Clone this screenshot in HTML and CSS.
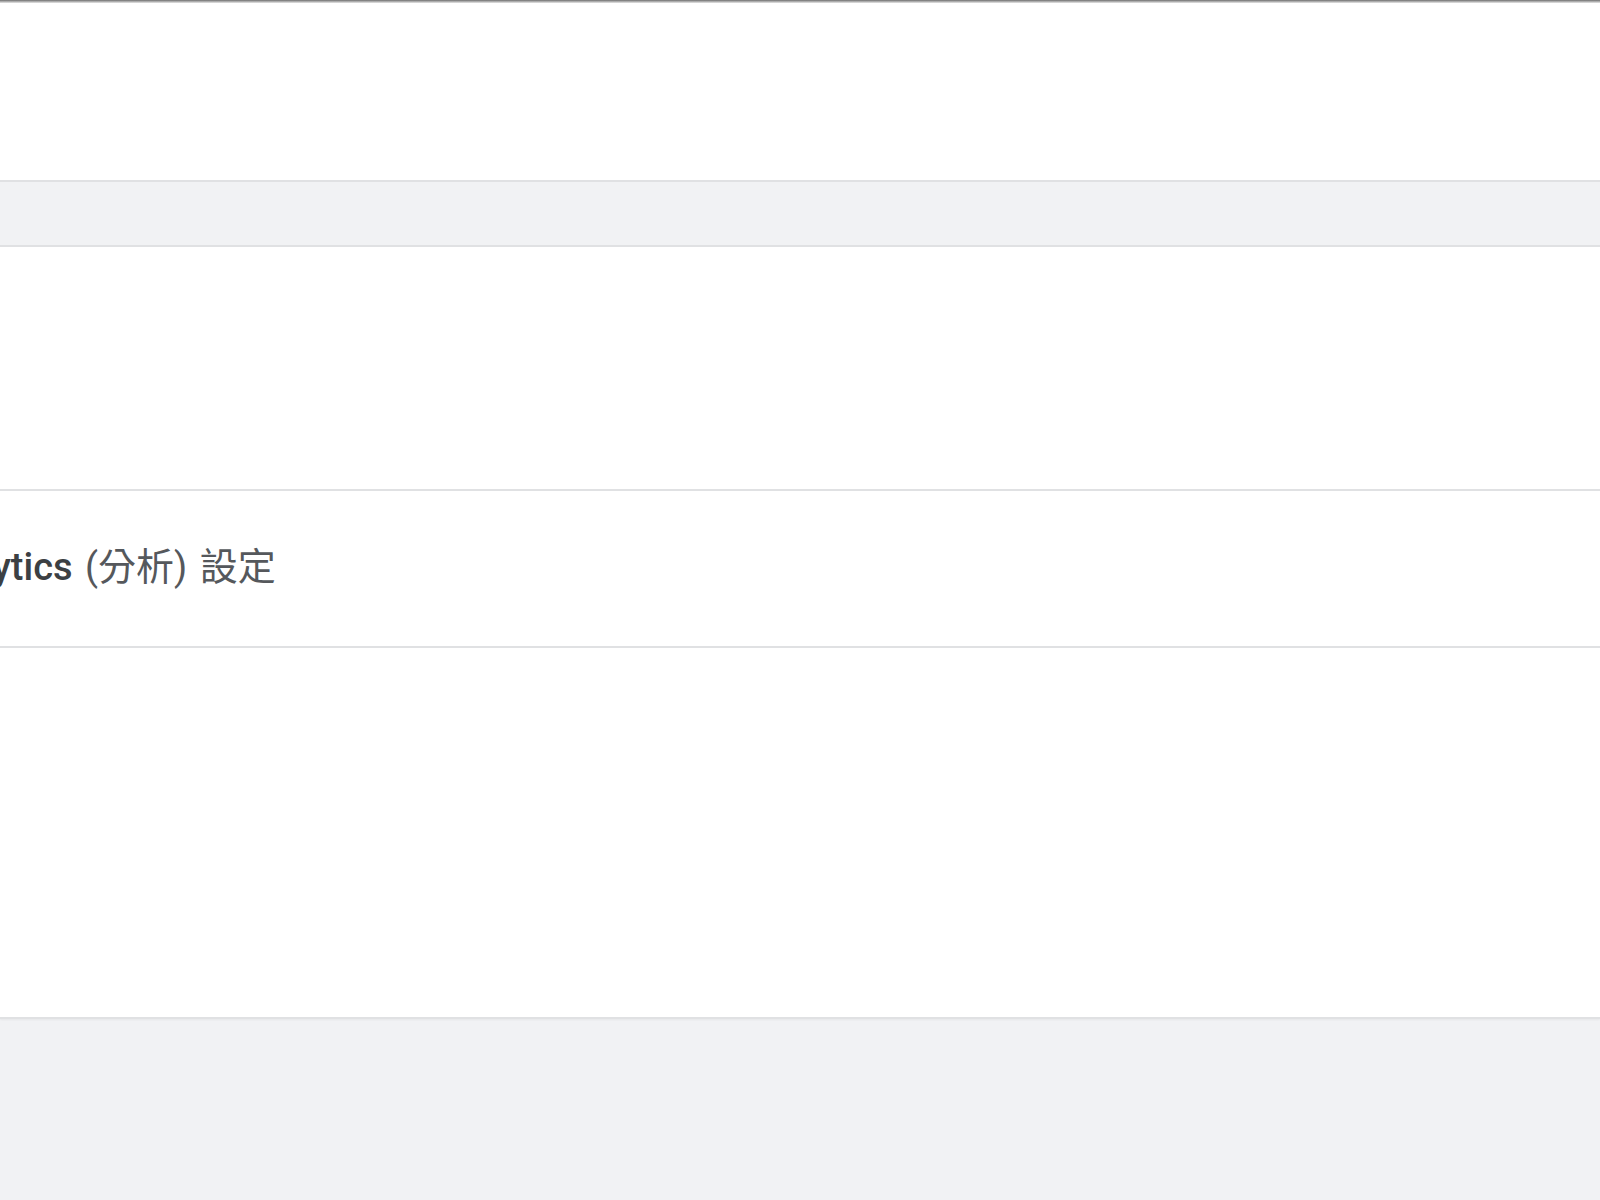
FILE: index.html
```html
<!DOCTYPE html>
<html lang="zh-Hant">
<head>
    <meta charset="UTF-8">
    <meta name="viewport" content="width=device-width, initial-scale=1.0">
    <title>Google Analytics (分析) 設定</title>
    <link rel="stylesheet" href="styles.css">
</head>
<body>
    <div class="top-edge"></div>
    <div class="panel panel-head"></div>
    <div class="band"></div>
    <div class="panel panel-intro"></div>
    <div class="panel panel-title">
        <h2 class="section-title">
            <span class="title-en">Google Analytics</span>
            <span class="title-zh">(分析) 設定</span>
        </h2>
    </div>
    <div class="panel panel-body"></div>
    <div class="page-rest"></div>
</body>
</html>
```

FILE: styles.css
```css
:root {
    --page-bg: #f1f2f4;
    --card-bg: #ffffff;
    --line: #e0e1e3;
    --text-dark: #3c4043;
    --text-soft: #55585c;
}
html, body {
    margin: 0;
    padding: 0;
    background: var(--page-bg);
    overflow-x: hidden;
}
body {
    font-family: Roboto, "Noto Sans CJK TC", "Noto Sans", sans-serif;
    color: var(--text-dark);
}
.top-edge {
    height: 3px;
    background: linear-gradient(to bottom, #6e6e6e, #b9b9b9 60%, #e6e6e6);
}
.panel {
    background: var(--card-bg);
}
.panel-head {
    height: 177px;
    border-bottom: 2px solid var(--line);
}
.band {
    height: 63px;
    background: var(--page-bg);
}
.panel-intro {
    height: 242px;
    border-top: 2px solid var(--line);
    border-bottom: 2px solid var(--line);
}
.panel-title {
    height: 155px;
    display: flex;
    align-items: center;
    border-bottom: 2px solid var(--line);
}
.section-title {
    margin: -3px 0 0 -217px;
    font-size: 38px;
    line-height: 1;
    word-spacing: 3px;
    white-space: nowrap;
}
.title-en {
    font-weight: 500;
    color: var(--text-dark);
}
.title-zh {
    font-weight: 400;
    color: var(--text-soft);
}
.panel-body {
    height: 369px;
    border-bottom: 2px solid var(--line);
    box-shadow: 0 1px 2px rgba(0, 0, 0, 0.05);
}
.page-rest {
    height: 181px;
}
```
